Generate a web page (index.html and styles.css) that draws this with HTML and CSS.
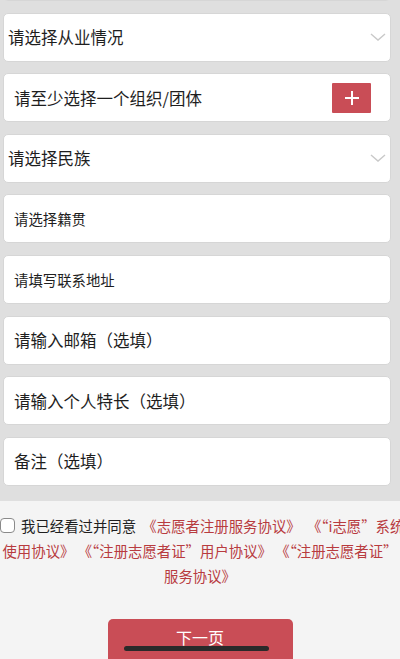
FILE: index.html
```html
<!DOCTYPE html>
<html lang="zh-CN">
<head>
    <meta charset="UTF-8">
    <meta name="viewport" content="width=device-width, initial-scale=1.0">
    <title>志愿者注册</title>
    <link rel="stylesheet" href="styles.css">
</head>
<body>
    <div class="form">
        <div class="field"></div>
        <div class="field select">
            <span>请选择从业情况</span>
            <svg class="arrow" width="16" height="8" viewBox="0 0 16 8"><path d="M1 1 L8 7 L15 1" fill="none" stroke="#c9c9c9" stroke-width="1.4"/></svg>
        </div>
        <div class="field group">
            <span>请至少选择一个组织/团体</span>
            <button class="add" type="button">
                <svg width="14" height="14" viewBox="0 0 14 14"><path d="M7 0 V14 M0 7 H14" stroke="#fff" stroke-width="2"/></svg>
            </button>
        </div>
        <div class="field select">
            <span>请选择民族</span>
            <svg class="arrow" width="16" height="8" viewBox="0 0 16 8"><path d="M1 1 L8 7 L15 1" fill="none" stroke="#c9c9c9" stroke-width="1.4"/></svg>
        </div>
        <div class="field small">请选择籍贯</div>
        <div class="field small">请填写联系地址</div>
        <div class="field">请输入邮箱（选填）</div>
        <div class="field">请输入个人特长（选填）</div>
        <div class="field">备注（选填）</div>
    </div>

    <div class="agree">
        <label class="agree-first">
            <input type="checkbox" class="check">
            <span>我已经看过并同意 <a href="#">《志愿者注册服务协议》</a> <a href="#">《“i志愿”系统</a></span>
        </label>
        <p class="agree-rest">
            <a href="#">使用协议》</a> <a href="#">《“注册志愿者证”用户协议》</a> <a href="#">《“注册志愿者证”</a><br>
            <a href="#">服务协议》</a>
        </p>
    </div>

    <div class="actions">
        <button class="next" type="button">下一页</button>
    </div>

    <div class="home-bar"></div>
</body>
</html>
```

FILE: styles.css
```css
body {
    margin: 0;
    font-family: "Noto Sans CJK SC", "Noto Sans", sans-serif;
    background: #f4f4f4;
    color: #1e1e1e;
    overflow: hidden;
}
.form {
    background: #dfdfdf;
    margin-top: -48px;
    padding: 0 9px 15px 3px;
    display: flex;
    flex-direction: column;
    gap: 11.6px;
}
.field {
    height: 49px;
    box-sizing: border-box;
    background: #fff;
    border: 1px solid #d6d6d6;
    border-radius: 5px;
    display: flex;
    align-items: center;
    justify-content: space-between;
    padding: 0 4px 0 10px;
    font-size: 16.5px;
}
.field.select {
    padding-left: 4px;
}
.field.small {
    padding-left: 10px;
    font-size: 14.4px;
}
.add {
    width: 39px;
    height: 30px;
    border: none;
    border-radius: 1px;
    background: #c94d56;
    display: flex;
    align-items: center;
    justify-content: center;
    padding: 0;
    margin-right: 15px;
}
.agree {
    padding-top: 12px;
    font-size: 14.4px;
    line-height: 25px;
}
.agree a {
    color: #b83b3f;
    text-decoration: none;
}
.agree-first {
    display: flex;
    align-items: center;
    gap: 6px;
    white-space: nowrap;
    word-spacing: 3px;
}
.check {
    appearance: none;
    -webkit-appearance: none;
    width: 15px;
    height: 15px;
    margin: 0;
    border: 1.5px solid #8a8a8a;
    border-radius: 4px;
    background: #fff;
    flex-shrink: 0;
}
.agree-rest {
    margin: 0;
    padding: 0 2px;
    text-align: center;
    white-space: nowrap;
}
.actions {
    margin-top: 31px;
    display: flex;
    justify-content: center;
}
.next {
    width: 185px;
    height: 46px;
    border: none;
    border-radius: 5px;
    background: #c94d56;
    color: #fff;
    font-family: inherit;
    font-size: 16px;
    padding: 0 0 9px;
}
.home-bar {
    position: fixed;
    left: 124px;
    bottom: 8px;
    width: 145px;
    height: 5px;
    border-radius: 3px;
    background: #2a2a2a;
}
```
